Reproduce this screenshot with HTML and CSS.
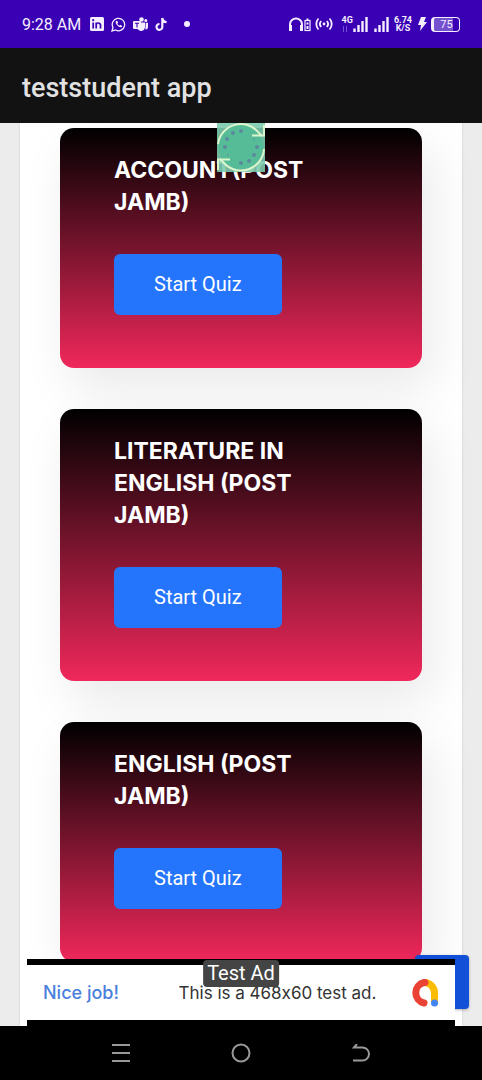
FILE: index.html
```html
<!DOCTYPE html>
<html lang="en">
<head>
<meta charset="utf-8">
<meta name="viewport" content="width=device-width, initial-scale=1">
<title>teststudent app</title>
<link rel="stylesheet" href="styles.css">
</head>
<body>
<div class="status">
  <div class="status-left">
    <span class="clock">9:28 AM</span>
    <svg width="14" height="14" viewBox="0 0 14 14"><rect width="14" height="14" rx="1.5" fill="#f4eeff"/><path d="M3.2 5.5v6M6.2 5.5v6M6.2 8q0-2 2-2t2.3 2v3.5" fill="none" stroke="#3a00b3" stroke-width="1.7"/><circle cx="3.2" cy="3.2" r="1.1" fill="#3a00b3"/></svg>
    <svg width="15" height="15" viewBox="0 0 15 15"><path d="M1 14l1-3.5A6.2 6.2 0 1 1 4.500 13z" fill="none" stroke="#f4eeff" stroke-width="1.3"/><path d="M5.200 4c-1.500 1.500.5 4 2 5.200s3.300 1.700 3.900.2c.3-.8-1.600-1.700-2-1.300l-.6.7c-1-.4-1.800-1.200-2.200-2.200l.6-.7C7.300 5.300 6 3.200 5.200 4z" fill="#f4eeff"/></svg>
    <svg width="15" height="15" viewBox="0 0 15 15"><circle cx="8.500" cy="2.500" r="2.300" fill="#f4eeff"/><circle cx="12.800" cy="3.600" r="1.500" fill="#f4eeff"/><path d="M5 5.500h7v5a4 4 0 0 1-7 2z" fill="#f4eeff"/><path d="M12.700 5.800H15v4.200a2.500 2.500 0 0 1-2.600 2.500" fill="#f4eeff"/><rect y="4" width="8" height="8" rx="1" fill="#f4eeff"/><path d="M2 6.200h4M4 6.200v4.200" stroke="#3a00b3" stroke-width="1.100" fill="none"/></svg>
    <svg width="13" height="15" viewBox="0 0 13 15"><path d="M7.300 1v8.900A2.900 2.900 0 1 1 4.500 7M7.300 1c.4 2.600 2 4 4.300 4.200" fill="none" stroke="#f4eeff" stroke-width="2.200"/></svg>
    <span class="more-dot"></span>
  </div>
  <div class="status-right">
    <svg width="24" height="16" viewBox="0 0 24 16"><path d="M2 14V8.500a6 6 0 0 1 12 0V14" fill="none" stroke="#f4eeff" stroke-width="2"/><path d="M1 9h3v6H1zM12 9h3v6h-3z" fill="#f4eeff"/><rect x="17" y="4.500" width="5" height="10" fill="none" stroke="#f4eeff" stroke-width="1.200"/><path d="M18.500 2.500h2v2h-2zM18.500 6.500h2v2h-2zM18.500 10h2v3h-2z" fill="#f4eeff"/></svg>
    <svg class="cast" width="18" height="14" viewBox="0 0 18 14"><path d="M3.500 1.500a8 8 0 0 0 0 11M6.200 4a4.500 4.500 0 0 0 0 6M14.500 1.500a8 8 0 0 1 0 11M11.800 4a4.500 4.500 0 0 1 0 6" fill="none" stroke="#f4eeff" stroke-width="1.800"/><circle cx="9" cy="7" r="1.400" fill="#f4eeff"/></svg>
    <span class="network"><span>4G</span><svg width="6" height="6" viewBox="0 0 6 6"><path d="M1.500 0v6M4.500 0v6" stroke="#7350d8"/></svg></span>
    <svg width="15" height="16" viewBox="0 0 15 16"><path d="M1.500 12.500V16M5.500 9v7M9.500 5v11M13.500 1v15" stroke="#f4eeff" stroke-width="2.400"/></svg>
    <svg class="bars-two" width="15" height="16" viewBox="0 0 15 16"><path d="M1.500 12.500V16M5.500 9v7M9.500 5v11M13.500 1v15" stroke="#f4eeff" stroke-width="2.400"/></svg>
    <span class="speed"><span>6.74</span><span>K/S</span></span>
    <svg class="bolt" width="9" height="14" viewBox="0 0 9 14"><path d="M3 0L0 8h3L2 14l7-9H6L8 0z" fill="#f4eeff"/></svg>
    <span class="battery">75</span>
  </div>
</div>
<header class="appbar"><h1>teststudent app</h1></header>
<main class="view">
  <div class="panel">
    <article class="card"><h2>ACCOUNT(POST JAMB)</h2><button class="start" type="button">Start Quiz</button></article>
    <article class="card"><h2>LITERATURE IN ENGLISH (POST JAMB)</h2><button class="start" type="button">Start Quiz</button></article>
    <article class="card"><h2>ENGLISH (POST JAMB)</h2><button class="start" type="button">Start Quiz</button></article>
  </div>
  <svg class="loader" width="48" height="49" viewBox="0 0 48 49"><path d="M0 0h48v49H0z" fill="#7ccbae" opacity=".9"/><circle cx="24" cy="24" r="22.500" fill="#56bc98"/><path d="M1 21A23 23 0 0 1 42 10l3 3M47 26A23 23 0 0 1 7 40l-4-4" fill="none" stroke="#dcf5cc" stroke-width="2"/><path d="M35 12.500h12V2M13 36.500H1V47" fill="none" stroke="#dcf5cc" stroke-width="2"/><g fill="#5a8a9c"><circle cx="24" cy="8" r="2"/><circle cx="16" cy="10" r="2"/><circle cx="10" cy="16" r="2"/><circle cx="8" cy="24" r="2"/><circle cx="11" cy="32" r="1" opacity=".6"/><circle cx="24" cy="40" r="2"/><circle cx="32" cy="38" r="2"/><circle cx="37" cy="32" r="2"/><circle cx="40" cy="24" r="2"/><circle cx="37" cy="16" r="1" opacity=".6"/></g></svg>
  <button class="floating" type="button" aria-label="Back to top"></button>
  <aside class="ad">
    <span class="ad-tag">Test Ad</span>
    <span class="ad-praise">Nice job!</span>
    <span class="ad-text">This is a 468x60 test ad.</span>
    <svg class="ad-logo" width="30" height="30" viewBox="0 0 30 30"><path d="M15 4.500A10.500 10.500 0 0 1 25.500 15v9" fill="none" stroke="#fbbc04" stroke-width="7"/><path d="M16 4.500h-1a10.500 10.500 0 0 0 0 20.500" fill="none" stroke="#ea4335" stroke-width="7" stroke-linecap="round"/><circle cx="25.500" cy="25" r="3.500" fill="#4285f4"/></svg>
  </aside>
</main>
<nav class="nav">
  <button type="button" aria-label="Recent apps"><svg width="18" height="18" viewBox="0 0 18 18"><path d="M0 1h18M0 9h18M0 17h18"/></svg></button>
  <button type="button" aria-label="Home"><svg width="20" height="20" viewBox="0 0 20 20"><circle cx="10" cy="10" r="8.500"/></svg></button>
  <button type="button" aria-label="Back"><svg width="18" height="18" viewBox="0 0 18 18"><path d="M5 0L2 3.500h8.500a6.500 6.500 0 0 1 0 13H1"/></svg></button>
</nav>
</body>
</html>
```
FILE: styles.css
```css
* { box-sizing: border-box; }
body {
  margin: 0;
  height: 100vh;
  display: flex;
  flex-direction: column;
  overflow: hidden;
  background: #000;
  font-family: Roboto, sans-serif;
}
button { border: 0; padding: 0; font: inherit; }
svg { flex: none; display: block; }
.status {
  flex: none;
  height: 48px;
  padding: 0 22px;
  display: flex;
  align-items: center;
  justify-content: space-between;
  background: #3a00b3;
  color: #f4eeff;
}
.status-left { display: flex; align-items: center; gap: 7px; }
.status-right { display: flex; align-items: center; }
.clock { font-size: 16px; margin-right: 2px; }
.more-dot { width: 6px; height: 6px; margin-left: 9px; border-radius: 50%; background: #f4eeff; }
.cast { margin: 0 9px 0 3px; }
.network { display: flex; flex-direction: column; align-items: flex-start; gap: 1px; font-size: 9px; line-height: 9px; font-weight: 700; }
.bars-two { margin: 0 5px 0 6px; }
.speed { display: flex; flex-direction: column; align-items: center; font-size: 9px; line-height: 8px; font-weight: 700; }
.bolt { margin: 0 4px 0 6px; }
.battery {
  width: 29px;
  border: 1px solid #f4eeff;
  border-left-width: 3px;
  border-radius: 4px;
  font-size: 11px;
  line-height: 13px;
  text-align: center;
  background: linear-gradient(90deg, #7550cf 75%, #3a00b3 75%);
}
.appbar {
  flex: none;
  height: 75px;
  padding: 4px 22px 0;
  display: flex;
  align-items: center;
  background: #121212;
  color: #e2e2e2;
}
.appbar h1 { margin: 0; font-size: 27px; font-weight: 500; }
.view {
  flex: 1;
  min-height: 0;
  position: relative;
  overflow: hidden;
  padding: 0 20px;
  background: #ececec;
}
.panel {
  min-height: 100%;
  padding: 5px 40px 60px;
  display: flex;
  flex-direction: column;
  gap: 41px;
  background: #fff;
  box-shadow: 0 0 2px rgba(0, 0, 0, .15);
}
.card {
  flex: none;
  padding: 26px 54px 53px;
  border-radius: 14px;
  background: linear-gradient(#000, #f0285b);
  box-shadow: 10px 20px 50px rgba(0, 0, 0, .09);
}
.card h2 {
  margin: 0 0 36px;
  max-width: 220px;
  color: #fff;
  font: 700 23px/32px Inter, sans-serif;
}
.start {
  display: block;
  height: 61px;
  padding: 0 40px 2px;
  border-radius: 6px;
  background: #2575fc;
  color: #fff;
  font-size: 20px;
}
.loader { position: absolute; top: 0; left: calc(50% - 24px); }
.floating {
  position: absolute;
  right: 13px;
  bottom: 17px;
  width: 54px;
  height: 54px;
  border-radius: 4px;
  background: #1250d8;
  box-shadow: 0 1px 3px rgba(0, 0, 0, .3);
}
.ad {
  position: absolute;
  left: 27px;
  right: 27px;
  bottom: 0;
  height: 67px;
  padding: 0 16px;
  border: solid #000;
  border-width: 6px 0;
  display: flex;
  align-items: center;
  justify-content: space-between;
  background: #fff;
  font-family: Inter, sans-serif;
  font-size: 17px;
  font-feature-settings: "calt" 0;
}
.ad-tag {
  position: absolute;
  top: -5px;
  left: 50%;
  transform: translateX(-50%);
  padding: 0 4px;
  border-radius: 4px;
  background: #444;
  color: #fff;
  font: 20px/27px Roboto, sans-serif;
  white-space: nowrap;
}
.ad-praise { color: #4a80dc; font-size: 18px; font-weight: 500; }
.ad-text { margin-left: 27px; color: #333; }
.nav {
  flex: none;
  height: 54px;
  padding: 0 61px;
  display: flex;
  background: #000;
}
.nav button { flex: 1; display: flex; align-items: center; justify-content: center; background: none; }
.nav svg { fill: none; stroke: #999; stroke-width: 2; }
```
